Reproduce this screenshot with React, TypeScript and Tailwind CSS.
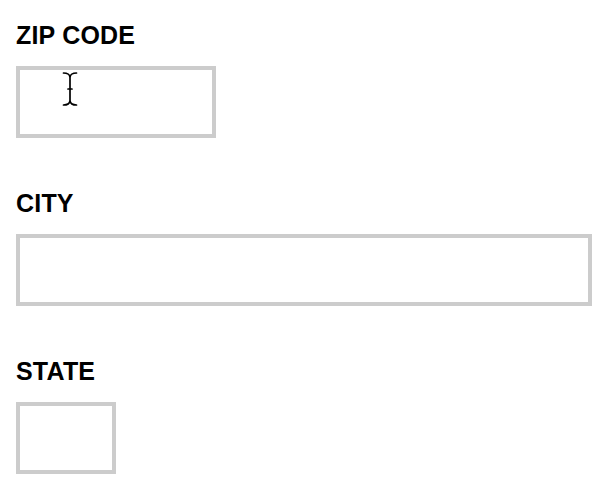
import React from "react";

function Cursor() {
  return (
    <svg
      className="absolute left-[40px] top-[1px]"
      width="20"
      height="36"
      viewBox="0 0 20 36"
      fill="none"
      stroke="#000"
      strokeWidth="1.7"
      strokeLinecap="round"
    >
      {/* top serif */}
      <path d="M3.5 2 C7 2 9.5 3 10 6 C10.5 3 13 2 16.5 2" />
      {/* stem */}
      <path d="M10 6 V30" />
      {/* middle tick */}
      <path d="M8 18 H12" />
      {/* bottom serif */}
      <path d="M3.5 34 C7 34 9.5 33 10 30 C10.5 33 13 34 16.5 34" />
    </svg>
  );
}

function Field({
  label,
  width,
  cursor,
}: {
  label: string;
  width: string;
  cursor?: boolean;
}) {
  return (
    <div className="flex flex-col">
      <label className="text-[25px] leading-[30px] font-bold text-black tracking-[0.2px]">
        {label}
      </label>
      <div className={`relative mt-4 h-[72px] border-4 border-[#cccccc] bg-white ${width}`}>
        {cursor && <Cursor />}
      </div>
    </div>
  );
}

export default function App() {
  return (
    <div
      className="min-h-screen bg-white px-4 pt-5 flex flex-col gap-[50px]"
      style={{ fontFamily: '"Liberation Sans", Arial, sans-serif' }}
    >
      <Field label="ZIP CODE" width="w-[200px]" cursor />
      <Field label="CITY" width="w-full" />
      <Field label="STATE" width="w-[100px]" />
    </div>
  );
}
